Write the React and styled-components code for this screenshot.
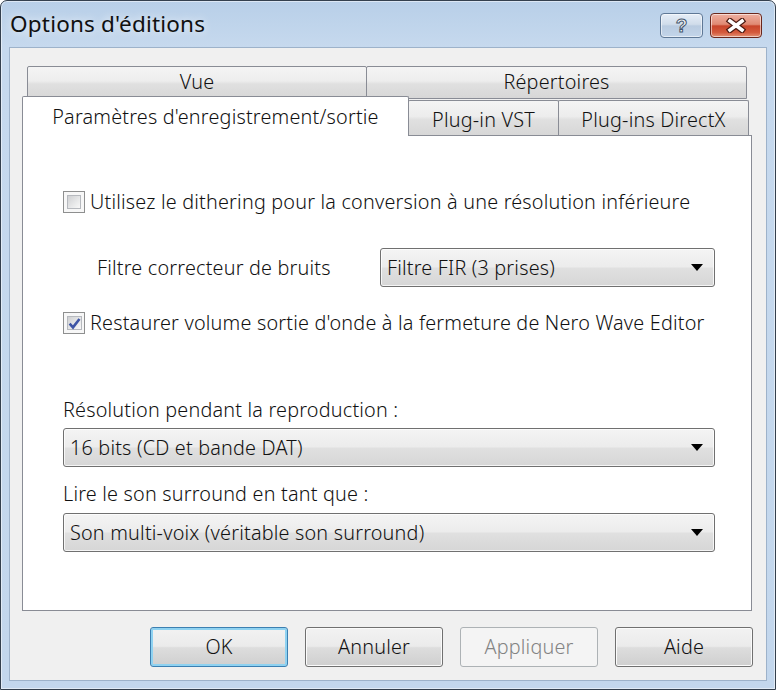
import React from 'react'
import styled, { createGlobalStyle } from 'styled-components'

const UI_FONT = `"Noto Sans", "Open Sans", sans-serif`

const GlobalStyle = createGlobalStyle`
  html, body {
    margin: 0;
    padding: 0;
    background: #ffffff;
  }
  * {
    box-sizing: border-box;
  }
`

const Window = styled.div`
  width: 776px;
  height: 690px;
  display: flex;
  flex-direction: column;
  border: 1px solid #34404e;
  border-radius: 7px 7px 0 0;
  background: linear-gradient(to bottom, #b8cfe8 0px, #c6d9ee 46px, #c3d7ed 100%);
  box-shadow: inset 0 0 0 1px rgba(255, 255, 255, 0.5);
  padding: 0 8px 8px 8px;
`

const TitleBar = styled.div`
  height: 46px;
  display: flex;
  align-items: flex-start;
  padding: 0 5px 0 1px;
`

const Title = styled.div`
  flex: 1;
  margin-top: 7px;
  font-family: "Noto Sans", sans-serif;
  font-size: 22.5px;
  font-weight: 400;
  letter-spacing: 0.2px;
  color: #101010;
  text-shadow: 0 0 8px rgba(255, 255, 255, 0.9);
`

const CaptionButtons = styled.div`
  display: flex;
  gap: 7px;
  margin-top: 12px;
`

const CaptionButton = styled.div`
  width: ${p => (p.$close ? 52 : 43)}px;
  height: 25px;
  border-radius: 4px;
  border: 1px solid ${p => (p.$close ? '#6a271c' : '#5f7896')};
  background: ${p =>
    p.$close
      ? 'linear-gradient(#eeb0a2 0%, #e08a73 45%, #c8452b 52%, #d45a3c 80%, #e39276 100%)'
      : 'linear-gradient(#e6eef8 0%, #d0dcea 45%, #b9cbe0 52%, #c3d5ea 100%)'};
  box-shadow: inset 0 0 0 1px rgba(255, 255, 255, 0.55);
  display: flex;
  align-items: center;
  justify-content: center;
`

const HelpGlyph = styled.span`
  font-family: "Liberation Sans", sans-serif;
  font-weight: bold;
  font-size: 19px;
  line-height: 1;
  color: #f4f6f9;
  -webkit-text-stroke: 1px #46576d;
`

const Client = styled.div`
  flex: 1;
  display: flex;
  flex-direction: column;
  background: #f0f0f0;
  border: 1px solid #9db2ca;
  padding: 18px 14px 0 12px;
  font-family: ${UI_FONT};
  font-size: 19.8px;
  font-weight: 350;
  letter-spacing: 0.2px;
  line-height: 24px;
  color: #111;
`

const BackRow = styled.div`
  display: flex;
  height: 33px;
  padding-left: 5px;
`

const FrontRow = styled.div`
  display: flex;
  align-items: flex-end;
  height: 39px;
  margin-top: -3px;
  position: relative;
  z-index: 1;
`

const tabGradient = 'linear-gradient(#f4f4f4 0%, #ededed 45%, #e0e0e0 55%, #d7d7d7 100%)'

const BackTab = styled.div`
  width: ${p => p.$w}px;
  height: 33px;
  border: 1px solid #898c95;
  border-radius: 2px 2px 0 0;
  background: ${tabGradient};
  display: flex;
  align-items: center;
  justify-content: center;
  padding-bottom: 1px;

  & + & {
    margin-left: -1px;
  }
`

const Tab = styled.div`
  width: ${p => p.$w}px;
  height: ${p => (p.$active ? 40 : 35)}px;
  margin-bottom: ${p => (p.$active ? -1 : 0)}px;
  border: 1px solid #898c95;
  border-bottom: none;
  border-radius: 2px 2px 0 0;
  background: ${p => (p.$active ? '#ffffff' : tabGradient)};
  display: flex;
  align-items: center;
  justify-content: center;
  padding-top: ${p => (p.$active ? 0 : 4)}px;

  & + & {
    margin-left: -1px;
  }
`

const Panel = styled.div`
  height: 476px;
  border: 1px solid #898c95;
  background: #ffffff;
  display: flex;
  flex-direction: column;
  padding: 0 36px 0 40px;
`

const CheckRow = styled.div`
  height: 24px;
  margin-top: ${p => p.$top}px;
  display: flex;
  align-items: center;
  gap: 5px;
`

const CheckBox = styled.span`
  width: 22px;
  height: 22px;
  flex-shrink: 0;
  border: 1px solid #8e8f8f;
  background: #f7f7f7;
  padding: 3px;
  display: flex;
`

const CheckInner = styled.span`
  flex: 1;
  border: 1px solid #b6b9be;
  background: linear-gradient(135deg, #cfd0d2 0%, #e6e7e8 55%, #f8f8f8 100%);
  display: flex;
  align-items: center;
  justify-content: center;
`

const FieldRow = styled.div`
  margin-top: ${p => p.$top}px;
  display: flex;
  align-items: center;
  justify-content: space-between;
  padding-left: 34px;
`

const Label = styled.div`
  margin-top: ${p => p.$top}px;
`

const Combo = styled.div`
  height: 39px;
  width: ${p => (p.$w ? `${p.$w}px` : 'auto')};
  margin-top: ${p => p.$top || 0}px;
  border: 1px solid #707070;
  border-radius: 3px;
  background: linear-gradient(#f4f4f4 0%, #ececec 48%, #e0e0e0 52%, #d6d6d6 100%);
  box-shadow: inset 0 0 0 1px rgba(255, 255, 255, 0.75);
  display: flex;
  align-items: center;
  justify-content: space-between;
  padding: 0 11px 0 6px;
`

const Arrow = styled.span`
  width: 0;
  height: 0;
  border-left: 6.5px solid transparent;
  border-right: 6.5px solid transparent;
  border-top: 7px solid #000;
`

const ButtonRow = styled.div`
  display: flex;
  justify-content: flex-end;
  gap: 17px;
  margin-top: 16px;
  margin-right: -1px;
`

const Button = styled.button`
  width: 138px;
  height: 40px;
  padding: 0;
  font: inherit;
  letter-spacing: inherit;
  color: ${p => (p.disabled ? '#838383' : '#111')};
  border-radius: 3px;
  border: 1px solid ${p => (p.$default ? '#3c7fb1' : p.disabled ? '#adb2b5' : '#707070')};
  background: ${p =>
    p.disabled
      ? '#f4f4f4'
      : 'linear-gradient(#f2f2f2 0%, #ebebeb 48%, #dddddd 52%, #cfcfcf 100%)'};
  box-shadow: ${p =>
    p.$default
      ? 'inset 0 0 0 2px #8fd2f1'
      : p.disabled
      ? 'none'
      : 'inset 0 0 0 1px #fbfbfb'};
`

function CloseGlyph() {
  return (
    <svg width="22" height="15" viewBox="0 0 22 15">
      <path d="M5 3 L17 12 M17 3 L5 12" stroke="#4a1a12" strokeWidth="6" strokeLinecap="square" />
      <path d="M5 3 L17 12 M17 3 L5 12" stroke="#ffffff" strokeWidth="3.6" strokeLinecap="square" />
    </svg>
  )
}

function CheckMark() {
  return (
    <svg width="13" height="13" viewBox="0 0 12 12">
      <path d="M1.5 6.2 L4.6 9.6 L10.6 1.8" fill="none" stroke="#3e55a6" strokeWidth="2.4" />
    </svg>
  )
}

function Check({ checked, top, children }) {
  return (
    <CheckRow $top={top}>
      <CheckBox>
        <CheckInner>{checked && <CheckMark />}</CheckInner>
      </CheckBox>
      <span>{children}</span>
    </CheckRow>
  )
}

function Select({ value, width, top }) {
  return (
    <Combo $w={width} $top={top}>
      <span>{value}</span>
      <Arrow />
    </Combo>
  )
}

export default function App() {
  return (
    <>
      <GlobalStyle />
      <Window>
        <TitleBar>
          <Title>Options d'éditions</Title>
          <CaptionButtons>
            <CaptionButton>
              <HelpGlyph>?</HelpGlyph>
            </CaptionButton>
            <CaptionButton $close>
              <CloseGlyph />
            </CaptionButton>
          </CaptionButtons>
        </TitleBar>

        <Client>
          <BackRow>
            <BackTab $w={340}>Vue</BackTab>
            <BackTab $w={381}>Répertoires</BackTab>
          </BackRow>
          <FrontRow>
            <Tab $active $w={387}>Paramètres d'enregistrement/sortie</Tab>
            <Tab $w={151}>Plug-in VST</Tab>
            <Tab $w={191}>Plug-ins DirectX</Tab>
          </FrontRow>

          <Panel>
            <Check top={54}>Utilisez le dithering pour la conversion à une résolution inférieure</Check>
            <FieldRow $top={34}>
              <span>Filtre correcteur de bruits</span>
              <Select value="Filtre FIR (3 prises)" width={335} />
            </FieldRow>
            <Check checked top={24}>
              Restaurer volume sortie d'onde à la fermeture de Nero Wave Editor
            </Check>

            <Label $top={63}>Résolution pendant la reproduction :</Label>
            <Select value="16 bits (CD et bande DAT)" top={6} />
            <Label $top={15}>Lire le son surround en tant que :</Label>
            <Select value="Son multi-voix (véritable son surround)" top={7} />
          </Panel>

          <ButtonRow>
            <Button $default>OK</Button>
            <Button>Annuler</Button>
            <Button disabled>Appliquer</Button>
            <Button>Aide</Button>
          </ButtonRow>
        </Client>
      </Window>
    </>
  )
}
